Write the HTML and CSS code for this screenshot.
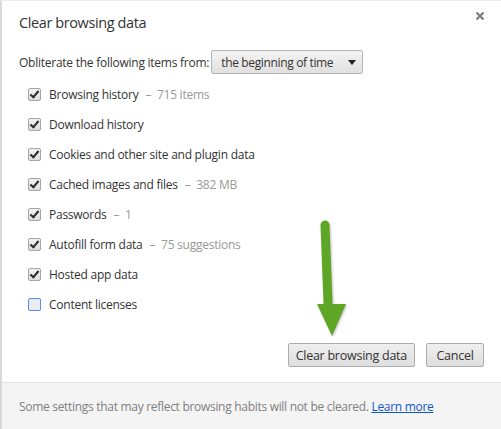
FILE: index.html
```html
<!DOCTYPE html>
<html lang="en">

<head>
    <meta charset="UTF-8" />
    <title>Clear browsing data</title>
    <link rel="stylesheet" href="styles.css">
</head>

<body>
    <div class="dialog">
        <div class="content">
            <div class="header">
                <h1>Clear browsing data</h1>
                <button class="close" aria-label="Close">
                    <svg width="8" height="8" viewBox="0 0 8 8">
                        <path d="M0.5 0.5 L7.5 7.5 M7.5 0.5 L0.5 7.5" stroke="#777" stroke-width="2" />
                    </svg>
                </button>
            </div>

            <div class="period">
                <span>Obliterate the following items from:</span>
                <div class="select">
                    <span>the beginning of time</span>
                    <span class="caret"></span>
                </div>
            </div>

            <ul class="items">
                <li><span class="check on"></span>Browsing history<span class="count">&ndash;&nbsp; 715 items</span></li>
                <li><span class="check on"></span>Download history</li>
                <li><span class="check on"></span>Cookies and other site and plugin data</li>
                <li><span class="check on"></span>Cached images and files<span class="count">&ndash;&nbsp; 382 MB</span></li>
                <li><span class="check on"></span>Passwords<span class="count">&ndash;&nbsp; 1</span></li>
                <li><span class="check on"></span>Autofill form data<span class="count">&ndash;&nbsp; 75 suggestions</span></li>
                <li><span class="check on"></span>Hosted app data</li>
                <li><span class="check focus"></span>Content licenses</li>
            </ul>

            <div class="buttons">
                <button class="btn">Clear browsing data</button>
                <button class="btn cancel">Cancel</button>
            </div>
        </div>

        <div class="footer">
            Some settings that may reflect browsing habits will not be cleared. <a href="#">Learn more</a>
        </div>

        <!-- green pointer drawn over the dialog -->
        <svg class="arrow" width="40" height="120" viewBox="0 0 40 120">
            <path d="M10 6 L13 84" stroke="#5fa526" stroke-width="9" stroke-linecap="round" fill="none" />
            <path d="M2 85 L31 85 L17 117 Z" fill="#5fa526" />
        </svg>
    </div>
</body>

</html>
```

FILE: styles.css
```css
body {
    margin: 0;
    font-family: 'Open Sans', 'Noto Sans', sans-serif;
    font-size: 12px;
    letter-spacing: -0.25px;
    color: #333;
    background: #fff;
}

.dialog {
    position: relative;
    min-height: 100vh;
    box-sizing: border-box;
    display: flex;
    flex-direction: column;
    border-left: 2px solid #d9d9d9;
    border-top: 1px solid #ececec;
}

.content {
    flex: 1;
    padding: 0 17px 0 17px;
}

/* Title bar */
.header {
    display: flex;
    justify-content: space-between;
    align-items: flex-start;
    height: 49px;
}

h1 {
    margin: 12px 0 0 0;
    font-size: 14.5px;
    font-weight: 400;
    line-height: 20px;
    letter-spacing: -0.4px;
    color: #333;
}

.close {
    margin: 11px 0 0 0;
    padding: 0;
    border: none;
    background: none;
    width: 8px;
    height: 8px;
}

.close svg {
    display: block;
}

/* Time period */
.period {
    display: flex;
    align-items: center;
    gap: 2px;
}

.select {
    display: flex;
    align-items: center;
    justify-content: space-between;
    box-sizing: border-box;
    width: 152px;
    height: 24px;
    padding: 0 6px 0 9px;
    border: 1px solid #b5b5b5;
    border-radius: 2px;
    background: linear-gradient(#f4f4f4, #e0e0e0);
    white-space: nowrap;
    letter-spacing: -0.35px;
}

.caret {
    width: 0;
    height: 0;
    border-left: 4px solid transparent;
    border-right: 4px solid transparent;
    border-top: 5px solid #222;
}

/* Checkbox list */
.items {
    list-style: none;
    margin: 5px 0 0 0;
    padding: 0;
}

.items li {
    display: flex;
    align-items: center;
    height: 30px;
    padding-left: 9px;
}

.count {
    color: #999;
    margin-left: 7px;
}

.check {
    position: relative;
    box-sizing: border-box;
    width: 13px;
    height: 13px;
    margin-right: 8px;
    border: 1px solid #a5a5a5;
    border-radius: 2px;
    background: linear-gradient(#f2f2f2, #dcdcdc);
}

.check.on::after {
    content: '';
    position: absolute;
    left: 3px;
    top: 0;
    width: 3px;
    height: 7px;
    border-right: 2px solid #2b2b2b;
    border-bottom: 2px solid #2b2b2b;
    transform: rotate(40deg);
}

.check.focus {
    border-color: #4d90fe;
    background: #ececec;
}

/* Action buttons */
.buttons {
    display: flex;
    justify-content: flex-end;
    gap: 11px;
    margin-top: 24px;
}

.btn {
    height: 24px;
    padding: 0 7px;
    font-family: inherit;
    font-size: 12.5px;
    letter-spacing: -0.25px;
    color: #333;
    border: 1px solid #acacac;
    border-radius: 2px;
    background: linear-gradient(#efefef, #dedede);
}

.btn.cancel {
    min-width: 58px;
}

/* Footer note */
.footer {
    margin-top: 14px;
    height: 47px;
    box-sizing: border-box;
    padding: 15px 17px 0 17px;
    border-top: 1px solid #e4e4e4;
    background: #f4f4f4;
    color: #808080;
    letter-spacing: -0.3px;
}

.footer a {
    color: #1155cc;
}

.arrow {
    position: absolute;
    left: 313px;
    top: 218px;
    filter: drop-shadow(1px 1px 1px rgba(0, 0, 0, 0.25));
}
```
